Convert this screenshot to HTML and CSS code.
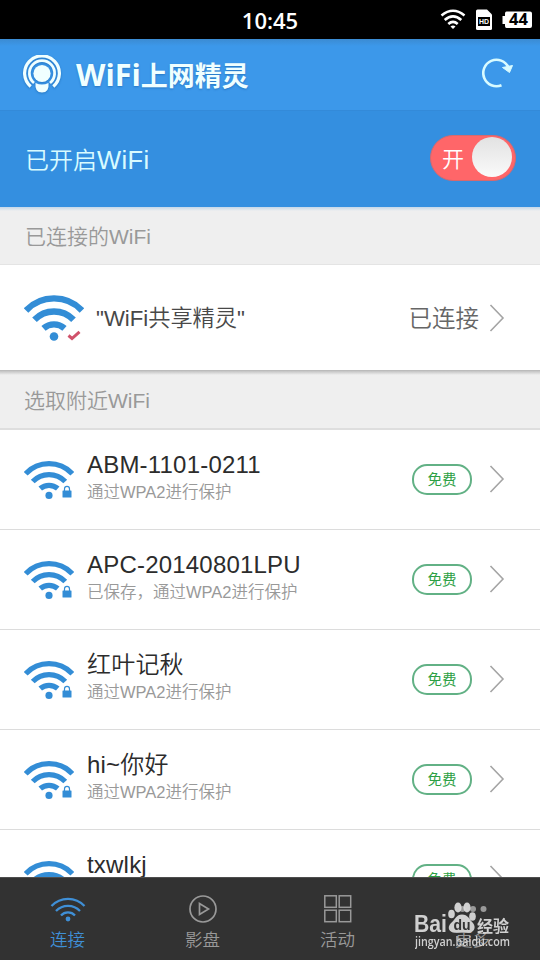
FILE: index.html
```html
<!DOCTYPE html>
<html lang="zh-CN">
<head>
    <meta charset="UTF-8">
    <meta name="viewport" content="width=device-width, initial-scale=1.0">
    <title>WiFi上网精灵</title>
    <link rel="stylesheet" href="styles.css">
</head>
<body>

<svg class="defs" width="0" height="0">
    <symbol id="wifi" viewBox="0 0 60 48">
        <g fill="none" stroke="currentColor" stroke-width="6.400">
            <path d="M2 16.500A38.500 38.500 0 0 1 58 16.500" />
            <path d="M10.500 25.800A27 27 0 0 1 49.500 25.800" />
            <path d="M19.500 34.300A16 16 0 0 1 40.500 34.300" />
        </g>
        <circle cx="30" cy="42.500" r="4.300" fill="currentColor" />
    </symbol>
    <symbol id="lock" viewBox="0 0 10 13">
        <path d="M2.500 6V4a2.500 2.700 0 0 1 5 0v2" fill="none" stroke="currentColor" stroke-width="1.200" />
        <rect x="0.500" y="5.500" width="9" height="7" rx="0.500" fill="currentColor" />
    </symbol>
    <symbol id="arrow" viewBox="0 0 16 28">
        <path d="M1.500 1L14 14L1.500 27" fill="none" stroke="currentColor" stroke-width="1.600" />
    </symbol>
</svg>

<div class="phone">
    <div class="status">
        <span class="clock">10:45</span>
        <svg class="status-icons" width="92" height="22" viewBox="0 0 92 22">
            <g fill="none" stroke="#fff" stroke-width="2.600">
                <path d="M1.500 6.500Q13-3 24.500 6.500" />
                <path d="M4.700 11Q13 3.600 21.300 11" />
                <path d="M8.300 15Q13 10.800 17.700 15" />
            </g>
            <path d="M10.500 17.500Q13 15.500 15.500 17.500L13 20Z" fill="#fff" />
            <path d="M37.500 0.500H47L52 5.500V19.500Q52 21 50.500 21H37.500Q36 21 36 19.500V2Q36 0.500 37.500 0.500Z" fill="#fff" />
            <rect x="38" y="8" width="12" height="9" fill="#000" />
            <text x="39" y="15" textLength="10" lengthAdjust="spacingAndGlyphs" class="sim-text">HD</text>
            <path d="M66.500 2.500H90Q92 2.500 92 4.500V17Q92 19 90 19H66.500Q65 19 65 17V15H62.500V7H65V4.500Q65 2.500 66.500 2.500Z" fill="#fff" />
            <text x="78.500" y="16.200" text-anchor="middle" class="battery-text">44</text>
        </svg>
    </div>

    <div class="header">
        <svg class="logo" width="38" height="38" viewBox="0 0 38 38">
            <g fill="none" stroke="#f0ffff">
                <path d="M7.700 31.500A17.400 17.400 0 1 1 30.300 31.500" stroke-width="3.200" />
                <path d="M11 28A12.600 12.600 0 1 1 27 28" stroke-width="2.800" />
            </g>
            <path d="M12.500 28Q19 31 25.500 28Q26.500 37.500 19 37.500Q11.500 37.500 12.500 28Z" fill="#f0ffff" />
            <circle cx="19" cy="18.500" r="8.600" fill="#f0ffff" />
        </svg>
        <h1><span class="latin">WiFi</span>上网精灵</h1>
        <svg class="refresh" width="32" height="30" viewBox="0 0 32 30">
            <path d="M19.500 27.200A13.200 13.200 0 1 1 26.500 9.500" fill="none" stroke="#d8fbff" stroke-width="2.600" />
            <path d="M20.500 9.500L30.500 7.500L27.500 14.500Z" fill="#d8fbff" stroke="#d8fbff" />
        </svg>
    </div>

    <div class="switch-row">
        <span>已开启<span class="latin">WiFi</span></span>
        <div class="switch"><span>开</span><div class="knob"></div></div>
    </div>

    <div class="section">已连接的WiFi</div>
    <div class="connected">
        <div class="signal big">
            <svg class="wifi"><use href="#wifi" /></svg>
            <svg class="check" viewBox="0 0 14 11"><path d="M1.500 5.500L5 8.500L12.500 1.800" fill="none" stroke="#d0526b" stroke-width="3" /></svg>
        </div>
        <span class="ssid">"WiFi共享精灵"</span>
        <span class="state">已连接</span>
        <svg class="arrow"><use href="#arrow" /></svg>
    </div>

    <div class="section nearby">选取附近WiFi</div>
    <div class="list">
        <div class="item">
            <div class="signal"><svg class="wifi"><use href="#wifi" /></svg><svg class="lock"><use href="#lock" /></svg></div>
            <div class="info"><p class="name">ABM-1101-0211</p><p class="desc">通过WPA2进行保护</p></div>
            <span class="free">免费</span>
            <svg class="arrow"><use href="#arrow" /></svg>
        </div>
        <div class="item">
            <div class="signal"><svg class="wifi"><use href="#wifi" /></svg><svg class="lock"><use href="#lock" /></svg></div>
            <div class="info"><p class="name">APC-20140801LPU</p><p class="desc">已保存，通过WPA2进行保护</p></div>
            <span class="free">免费</span>
            <svg class="arrow"><use href="#arrow" /></svg>
        </div>
        <div class="item">
            <div class="signal"><svg class="wifi"><use href="#wifi" /></svg><svg class="lock"><use href="#lock" /></svg></div>
            <div class="info"><p class="name">红叶记秋</p><p class="desc">通过WPA2进行保护</p></div>
            <span class="free">免费</span>
            <svg class="arrow"><use href="#arrow" /></svg>
        </div>
        <div class="item">
            <div class="signal"><svg class="wifi"><use href="#wifi" /></svg><svg class="lock"><use href="#lock" /></svg></div>
            <div class="info"><p class="name">hi~你好</p><p class="desc">通过WPA2进行保护</p></div>
            <span class="free">免费</span>
            <svg class="arrow"><use href="#arrow" /></svg>
        </div>
        <div class="item">
            <div class="signal"><svg class="wifi"><use href="#wifi" /></svg></div>
            <div class="info"><p class="name">txwlkj</p></div>
            <span class="free">免费</span>
            <svg class="arrow"><use href="#arrow" /></svg>
        </div>
    </div>

    <div class="tabs">
        <div class="tab active">
            <svg width="36" height="30" viewBox="0 0 36 30">
                <g fill="none" stroke="currentColor" stroke-width="2.300">
                    <path d="M1.500 12A22.500 22.500 0 0 1 34.500 12" />
                    <path d="M6 17A16.500 16.500 0 0 1 30 17" />
                    <path d="M11 21.500A9.500 9.500 0 0 1 25 21.500" />
                </g>
                <circle cx="18" cy="25" r="2.400" fill="currentColor" />
            </svg>
            <span>连接</span>
        </div>
        <div class="tab">
            <svg width="30" height="30" viewBox="0 0 30 30" fill="none" stroke="currentColor" stroke-width="1.700">
                <circle cx="15" cy="15" r="13" />
                <path d="M11.500 9.500V20.500L20.500 15Z" />
            </svg>
            <span>影盘</span>
        </div>
        <div class="tab">
            <svg width="30" height="30" viewBox="0 0 30 30" fill="none" stroke="currentColor" stroke-width="1.500">
                <rect x="1.800" y="1.800" width="11.500" height="11.500" />
                <rect x="16.200" y="1.800" width="11.500" height="11.500" />
                <rect x="1.800" y="16.200" width="11.500" height="11.500" />
                <rect x="16.200" y="16.200" width="11.500" height="11.500" />
            </svg>
            <span>活动</span>
        </div>
        <div class="tab">
            <svg width="30" height="30" viewBox="0 0 30 30" fill="currentColor">
                <circle cx="4.500" cy="15" r="3" /><circle cx="15" cy="15" r="3" /><circle cx="25.500" cy="15" r="3" />
            </svg>
            <span>更多</span>
        </div>
    </div>

    <svg class="watermark" width="100" height="54" viewBox="0 0 100 54">
        <text x="-1" y="34" textLength="33" lengthAdjust="spacingAndGlyphs" class="wm-bai">Bai</text>
        <ellipse cx="36.500" cy="16" rx="3.300" ry="4.300" />
        <ellipse cx="43" cy="9.500" rx="3.600" ry="4.900" />
        <ellipse cx="52" cy="9.500" rx="3.600" ry="4.900" />
        <ellipse cx="57.500" cy="18.500" rx="3.300" ry="4.300" />
        <path d="M47 16.500C53 16.500 54 21 58 25C62 30 58 36 52 34.500Q47 33.500 42 34.500C35 36 31 30 36 25C41 21 41 16.500 47 16.500Z" />
        <text x="47" y="32" text-anchor="middle" class="wm-du">du</text>
        <text x="62" y="33.500" textLength="32" class="wm-cn">经验</text>
        <text x="0" y="47.500" textLength="95" lengthAdjust="spacingAndGlyphs" class="wm-url">jingyan.baidu.com</text>
    </svg>
</div>

</body>
</html>
```

FILE: styles.css
```css
* {
    box-sizing: border-box;
}
body {
    margin: 0;
    font-family: "Liberation Sans", "Noto Sans CJK SC", sans-serif;
    font-weight: 350;
    overflow: hidden;
}
p, h1 {
    margin: 0;
}
.defs {
    position: absolute;
}
.phone {
    position: relative;
    display: flex;
    flex-direction: column;
    width: 540px;
    height: 960px;
    background: #fff;
    overflow: hidden;
}
.status {
    display: grid;
    grid-template-columns: 1fr auto 1fr;
    align-items: center;
    height: 39px;
    padding-right: 8px;
    background: #000;
    color: #fff;
}
.clock {
    grid-column: 2;
    padding-left: 8px;
    font: 600 22px "Open Sans", sans-serif;
}
.status-icons {
    justify-self: end;
}
.sim-text {
    font: bold 7.5px "Liberation Sans", sans-serif;
    fill: #fff;
}
.battery-text {
    font: bold 16.5px "Open Sans", sans-serif;
    fill: #000;
}
.header {
    display: flex;
    align-items: center;
    height: 72px;
    padding: 0 26px 0 23px;
    background: linear-gradient(#3b8bd2, #3c98ea 7px);
    border-bottom: 1px solid #338ad9;
}
.header h1 {
    flex: 1;
    margin-left: 15px;
    color: #f0ffff;
    font: bold 27px/40px "Open Sans", "Noto Sans CJK SC", sans-serif;
    text-shadow: 0 1px 2px rgba(0, 70, 140, 0.4);
}
.header .latin {
    font-size: 30.5px;
}
.logo {
    margin-top: -2px;
    filter: drop-shadow(0 1px 1px rgba(0, 70, 140, 0.4));
}
.refresh {
    margin-top: -4px;
}
.switch-row {
    display: flex;
    align-items: center;
    justify-content: space-between;
    height: 96px;
    padding: 0 24px 2px 25px;
    background: #348fe0;
    color: #d8fbff;
    font-size: 24px;
}
.switch-row .latin {
    font-size: 25.5px;
    letter-spacing: 0.4px;
}
.switch {
    display: flex;
    align-items: center;
    justify-content: space-between;
    width: 86px;
    height: 46px;
    padding: 0 3px 2px 11px;
    border: 1px solid #d5696f;
    border-radius: 23px;
    background: #ff6669;
    color: #fff;
    font-size: 22px;
}
.knob {
    width: 40px;
    height: 40px;
    border-radius: 50%;
    background: linear-gradient(#e2e2e2, #fafafa);
}
.section {
    height: 58px;
    padding-left: 25px;
    border-bottom: 1px solid #e4e4e4;
    background: linear-gradient(#c3d7ea, #efefef 4px);
    color: #999;
    font-size: 21px;
    line-height: 60px;
}
.nearby {
    height: 59px;
    padding-left: 24px;
    border-bottom: 2px solid #dedede;
    background: linear-gradient(#c2c2c2, #efefef 4px);
}
.connected {
    display: flex;
    align-items: center;
    height: 106px;
    padding: 0 35px 0 24px;
    border-bottom: 1px solid #bbb;
}
.signal {
    position: relative;
    width: 50px;
    height: 40px;
    color: #338dd6;
}
.signal .wifi {
    display: block;
    width: 100%;
    height: 100%;
}
.big {
    width: 60px;
    height: 48px;
}
.check {
    position: absolute;
    right: 3px;
    bottom: 1px;
    width: 14px;
    height: 11px;
}
.lock {
    position: absolute;
    right: 2px;
    bottom: 2px;
    width: 10px;
    height: 13px;
}
.ssid {
    flex: 1;
    margin-left: 12px;
    padding-bottom: 4px;
    color: #484848;
    font-size: 22.2px;
}
.state {
    margin-right: 10px;
    padding-bottom: 2px;
    color: #666;
    font-size: 23.5px;
}
.arrow {
    width: 16px;
    height: 28px;
    color: #a4a4a4;
}
.list {
    flex: 1;
    min-height: 0;
    overflow: hidden;
}
.item {
    display: flex;
    align-items: center;
    height: 100px;
    padding: 0 35px 0 24px;
    border-bottom: 1px solid #dcdcdc;
}
.item .arrow {
    margin-bottom: 2px;
}
.info {
    flex: 1;
    height: 60px;
    margin-left: 13px;
}
.name {
    height: 30px;
    color: #2c2c2c;
    font-size: 24px;
    letter-spacing: 0.2px;
    line-height: 30px;
}
.desc {
    color: #999;
    font-size: 16.5px;
    line-height: 24px;
}
.free {
    width: 60px;
    height: 31px;
    margin-right: 17px;
    border: 2px solid #62b185;
    border-radius: 15px;
    color: #2ca044;
    font-size: 14.5px;
    font-weight: 400;
    line-height: 29px;
    text-align: center;
}
.tabs {
    display: flex;
    height: 83px;
    border-top: 1px solid #4e4e4e;
    background: #323232;
}
.tab {
    display: flex;
    flex: 1;
    flex-direction: column;
    align-items: center;
    padding-top: 16px;
    color: #999;
    font-size: 17.5px;
    line-height: 32px;
}
.active {
    color: #3f8fd6;
}
/* site mark over the last tab */
.watermark {
    position: absolute;
    left: 415px;
    top: 898px;
    fill: #dcdcdc;
    opacity: 0.93;
}
.wm-bai {
    font: bold 23px "Liberation Sans", sans-serif;
}
.wm-du {
    fill: #323232;
    font: bold 14px "Liberation Sans", sans-serif;
}
.wm-cn {
    font: bold 16px "Noto Sans CJK SC", sans-serif;
}
.wm-url {
    font: 600 12px "Open Sans", sans-serif;
}
```
